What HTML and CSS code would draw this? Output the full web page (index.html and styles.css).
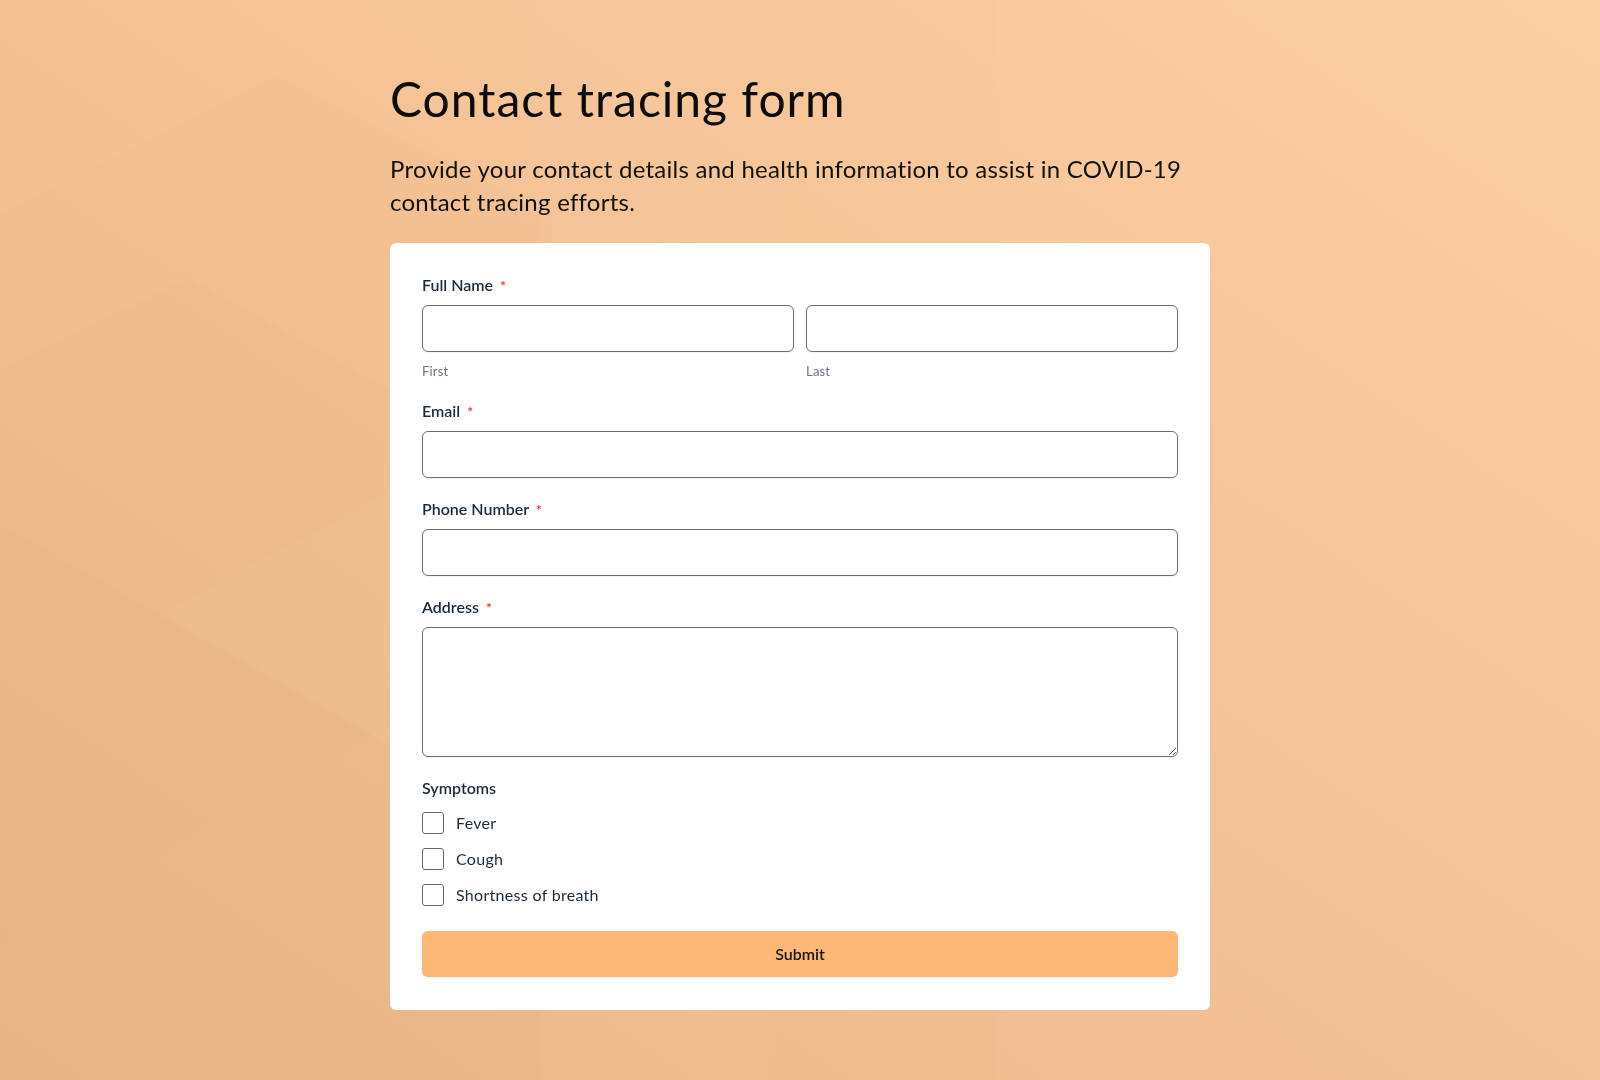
FILE: index.html
```html
<!DOCTYPE html>
<html lang="en">
<head>
<meta charset="utf-8">
<title>Contact tracing form</title>
<link rel="stylesheet" href="styles.css">
</head>
<body>
<svg class="bg" viewBox="0 0 1600 1080" preserveAspectRatio="none" aria-hidden="true">
  <defs>
    <linearGradient id="g" x1="0" y1="1" x2="1" y2="0">
      <stop offset="0" stop-color="#ebb788"/>
      <stop offset="0.45" stop-color="#f2c093"/>
      <stop offset="1" stop-color="#fdcea2"/>
    </linearGradient>
  </defs>
  <rect width="1600" height="1080" fill="url(#g)"/>
  <rect x="540" y="0" width="230" height="1080" fill="#ffffff" opacity="0.02"/>
  <rect x="997" y="0" width="603" height="1080" fill="#ffffff" opacity="0.025"/>
  <polygon points="276,77 552,215 552,1080 0,1080 0,215" fill="#a0602a" opacity="0.015"/>
  <polygon points="189,278 540,474 540,830 0,525 0,370" fill="#a0602a" opacity="0.02"/>
  <polygon points="0,525 540,830 540,1080 0,1080" fill="#a0602a" opacity="0.03"/>
  <polygon points="160,615 540,410 540,830" fill="#ffffff" opacity="0.03"/>
  <polygon points="0,945 540,640 540,1080 0,1080" fill="#ffffff" opacity="0.025"/>
</svg>
<main class="page">
  <h1 class="title">Contact tracing form</h1>
  <p class="lead">Provide your contact details and health information to assist in COVID-19 contact tracing efforts.</p>
  <form class="card">
    <div class="field">
      <div class="label">Full Name <span class="req">*</span></div>
      <div class="name-row">
        <div class="name-col">
          <input class="input" type="text" aria-label="First">
          <span class="sublabel">First</span>
        </div>
        <div class="name-col">
          <input class="input" type="text" aria-label="Last">
          <span class="sublabel">Last</span>
        </div>
      </div>
    </div>
    <div class="field">
      <label class="label" for="email">Email <span class="req">*</span></label>
      <input class="input" id="email" type="email">
    </div>
    <div class="field">
      <label class="label" for="phone">Phone Number <span class="req">*</span></label>
      <input class="input" id="phone" type="tel">
    </div>
    <div class="field">
      <label class="label" for="address">Address <span class="req">*</span></label>
      <textarea class="input textarea" id="address"></textarea>
    </div>
    <div class="field symptoms">
      <div class="label">Symptoms</div>
      <div class="checks">
        <label class="check"><input class="box" type="checkbox"><span>Fever</span></label>
        <label class="check"><input class="box" type="checkbox"><span>Cough</span></label>
        <label class="check"><input class="box" type="checkbox"><span>Shortness of breath</span></label>
      </div>
    </div>
    <button class="submit" type="button">Submit</button>
  </form>
</main>
</body>
</html>
```

FILE: styles.css
```css
* { box-sizing: border-box; }

html, body {
  margin: 0;
  padding: 0;
  height: 100%;
}

body {
  font-family: Lato, "Noto Sans", "Liberation Sans", sans-serif;
  background: #f2c092;
  overflow: hidden;
  position: relative;
}

.bg {
  position: fixed;
  left: 0;
  top: 0;
  width: 100%;
  height: 100%;
  z-index: 0;
}

.page {
  position: relative;
  z-index: 1;
  width: 820px;
  margin: 0 auto;
  padding-top: 70px;
}

.title {
  margin: 0;
  font-size: 48px;
  line-height: 1.2;
  font-weight: 400;
  letter-spacing: 1px;
  color: #0b0b0b;
}

.lead {
  margin: 24px 0 0;
  font-size: 24px;
  line-height: 33.6px;
  font-weight: 400;
  letter-spacing: 0.25px;
  color: #111111;
}

.card {
  margin-top: 24px;
  background: #ffffff;
  border-radius: 6px;
  padding: 30px 32px 33px;
}

.field {
  display: flex;
  flex-direction: column;
  margin-bottom: 19px;
}

.label {
  display: block;
  font-size: 16px;
  line-height: 24px;
  font-weight: 600;
  color: #1c2a3c;
  margin-bottom: 7px;
}

.req {
  color: #e0342a;
  font-size: 14px;
  margin-left: 3px;
}

.name-row {
  display: grid;
  grid-template-columns: 1fr 1fr;
  column-gap: 12px;
}

.name-col {
  display: flex;
  flex-direction: column;
}

.input {
  display: block;
  width: 100%;
  height: 47px;
  margin: 0;
  padding: 8px 12px;
  border: 1px solid #666e7b;
  border-radius: 6px;
  background: #ffffff;
  box-shadow: 0 1px 2px rgba(30, 40, 60, 0.06);
  font: inherit;
  outline: none;
}

.textarea {
  height: 130px;
  resize: vertical;
}

.sublabel {
  margin-top: 10px;
  font-size: 13px;
  line-height: 18px;
  color: #6b7280;
  letter-spacing: 0.2px;
}

.symptoms .label {
  margin-bottom: 11px;
}

.checks {
  display: flex;
  flex-direction: column;
  gap: 12px;
}

.check {
  display: flex;
  align-items: center;
  gap: 12px;
  height: 24px;
  font-size: 16px;
  line-height: 24px;
  letter-spacing: 0.3px;
  color: #1c2a3c;
}

.box {
  appearance: none;
  -webkit-appearance: none;
  width: 22px;
  height: 22px;
  margin: 0;
  border: 1px solid #5f6775;
  border-radius: 3px;
  background: #ffffff;
  flex: none;
}

.symptoms {
  margin-bottom: 24px;
}

.submit {
  display: block;
  width: 100%;
  height: 46px;
  border: 0;
  border-radius: 6px;
  background: #fdb776;
  box-shadow: 0 1px 3px rgba(60, 70, 110, 0.12);
  font-family: inherit;
  font-size: 16px;
  font-weight: 600;
  color: #141414;
  cursor: pointer;
}
```
